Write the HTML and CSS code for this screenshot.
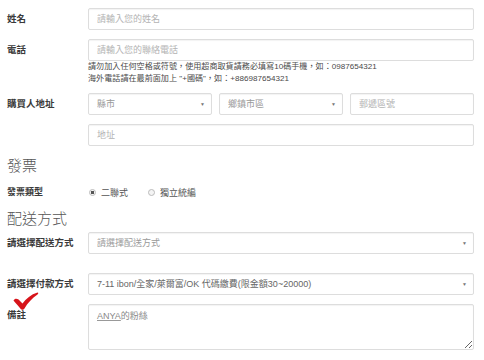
FILE: index.html
```html
<!DOCTYPE html>
<html lang="zh-Hant">
<head>
  <meta charset="UTF-8" />
  <meta name="viewport" content="width=device-width, initial-scale=1.0" />
  <title>訂購資料</title>
  <link rel="stylesheet" href="styles.css">
</head>
<body>

  <form class="order-form">
    <!-- 購買人 -->
    <div class="row">
      <label class="label">姓名</label>
      <input class="field" type="text" placeholder="請輸入您的姓名" />
    </div>

    <div class="row">
      <label class="label">電話</label>
      <div>
        <input class="field" type="text" placeholder="請輸入您的聯絡電話" />
        <p class="help">請勿加入任何空格或符號，使用超商取貨請務必填寫10碼手機，如：0987654321<br>海外電話請在最前面加上 "+國碼"，如：+886987654321</p>
      </div>
    </div>

    <div class="row">
      <label class="label">購買人地址</label>
      <div class="address">
        <div class="select-wrap">
          <select class="field select"><option>縣市</option></select>
        </div>
        <div class="select-wrap">
          <select class="field select"><option>鄉鎮市區</option></select>
        </div>
        <input class="field" type="text" placeholder="郵遞區號" />
      </div>
    </div>

    <div class="row">
      <span></span>
      <input class="field" type="text" placeholder="地址" />
    </div>

    <!-- 發票 -->
    <h3 class="section-title">發票</h3>
    <div class="row row-radio">
      <label class="label">發票類型</label>
      <div class="radios">
        <span class="radio checked"></span><span class="radio-text">二聯式</span>
        <span class="radio"></span><span class="radio-text">獨立統編</span>
      </div>
    </div>

    <!-- 配送 -->
    <h3 class="section-title section-ship">配送方式</h3>
    <div class="row">
      <label class="label">請選擇配送方式</label>
      <div class="select-wrap">
        <select class="field select"><option>請選擇配送方式</option></select>
      </div>
    </div>

    <div class="row row-pay">
      <label class="label">請選擇付款方式</label>
      <div class="select-wrap">
        <select class="field select dark"><option>7-11 ibon/全家/萊爾富/OK 代碼繳費(限金額30~20000)</option></select>
      </div>
    </div>

    <div class="row row-note">
      <label class="label">備註</label>
      <div class="field note"><span class="typo">ANYA</span>的粉絲</div>
      <svg class="check" width="26" height="18" viewBox="0 0 26 18">
        <path d="M0.5 8.5 C2 6 5 6.5 7 9 L9.5 11.5 C13 6.5 18 2.5 24.5 0.5 C25.5 0.5 25.5 1.5 24.5 2.5 C19 6.5 14.5 11 11.5 16.5 C10.5 18 8.5 18 7.5 16.8 C5.5 14 3 11.5 0.5 8.5 Z" fill="#d7141a" />
      </svg>
    </div>
  </form>

</body>
</html>
```

FILE: styles.css
```css
* {
  margin: 0;
  padding: 0;
  box-sizing: border-box;
}

html,
body {
  width: 100%;
  height: 100%;
  overflow: hidden;
  background: #fff;
  font-family: "Liberation Sans", "Noto Sans CJK TC", sans-serif;
  color: #333;
}

.order-form {
  padding: 8px 10px 0 7px;
}

.row {
  position: relative;
  display: grid;
  grid-template-columns: 81px 1fr;
  align-items: start;
  margin-bottom: 9px;
}

.label {
  font-size: 9.5px;
  font-weight: bold;
  line-height: 22px;
  color: #3a3a3a;
}

.field {
  display: block;
  width: 100%;
  height: 22px;
  padding: 0 8px;
  border: 1px solid #ddd;
  border-radius: 2px;
  background: #fff;
  box-shadow: inset 0 1px 1px rgba(0, 0, 0, 0.05);
  font-family: inherit;
  font-size: 9px;
  color: #999;
  outline: none;
}

.field::placeholder {
  color: #b3b3b3;
}

.help {
  font-size: 8.1px;
  line-height: 12px;
  color: #4a4a4a;
  margin-bottom: -1px;
}

.address {
  display: grid;
  grid-template-columns: 1fr 1fr 1fr;
  gap: 7px;
}

.select-wrap {
  position: relative;
}

.select-wrap::after {
  content: "▼";
  position: absolute;
  right: 7px;
  top: 8px;
  font-size: 5px;
  color: #777;
  pointer-events: none;
}

.select {
  appearance: none;
  -webkit-appearance: none;
}

.select.dark {
  color: #666;
}

.section-title {
  font-size: 15px;
  font-weight: 300;
  line-height: 20px;
  color: #555;
  margin: 10px 0 10px;
}

.section-ship {
  margin: 11px 0 3px;
}

.row-radio {
  margin-bottom: 0;
}

.row-radio .label {
  line-height: 12px;
  font-size: 9px;
}

.radios {
  display: flex;
  align-items: center;
  height: 12px;
  padding-left: 1px;
  font-size: 9px;
  color: #555;
}

.radio {
  width: 7px;
  height: 7px;
  border: 1px solid #bbb;
  border-radius: 50%;
  background: #f4f4f4;
  margin-right: 5px;
}

.radio.checked {
  background: radial-gradient(circle, #555 0 1.6px, #f4f4f4 2px);
}

.radio-text {
  margin-right: 20px;
}

.row-pay {
  margin-top: 19px;
}

.note {
  height: 46px;
  padding-top: 4px;
  line-height: 14px;
  color: #888;
  resize: vertical;
  overflow: auto;
}

.typo {
  text-decoration: underline;
  text-decoration-color: #999;
}

.check {
  position: absolute;
  left: 6px;
  top: -12px;
}
```
